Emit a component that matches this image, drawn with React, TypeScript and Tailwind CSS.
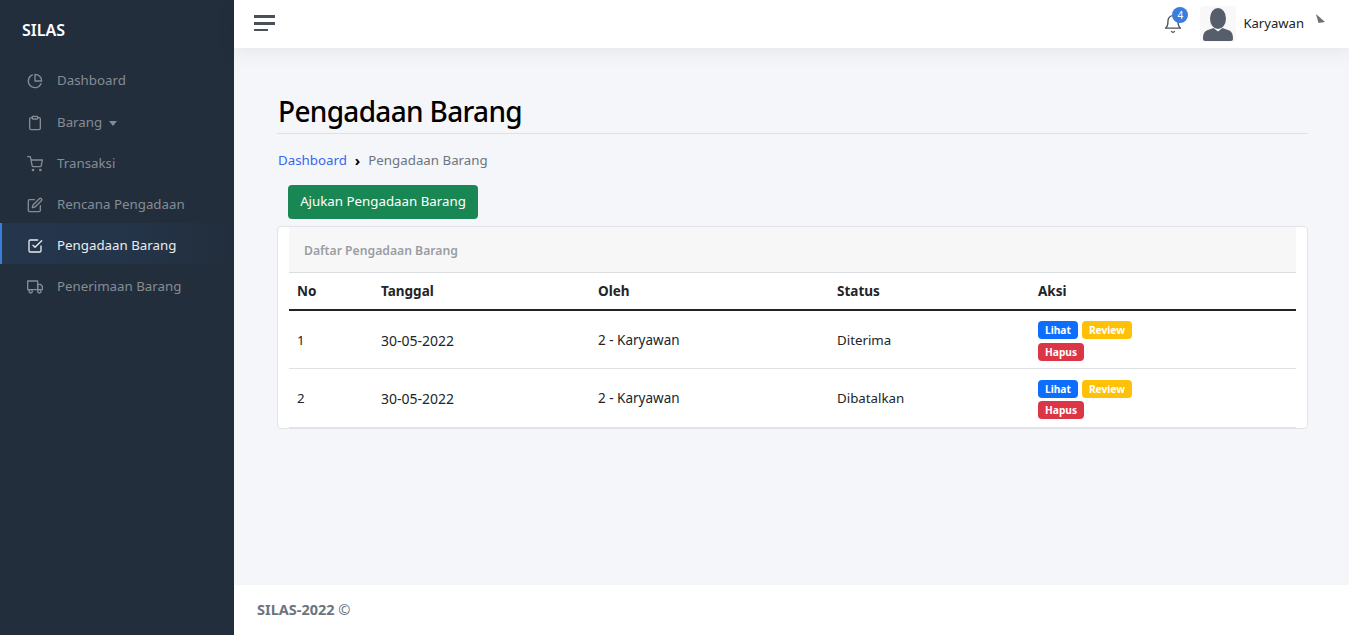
import React from "react";

const Badge = ({ c, children }: { c: string; children: React.ReactNode }) => (
  <span className={`inline-block rounded-[4px] px-[7px] py-[3px] text-[10.2px] leading-[12px] font-bold text-white ${c}`}>{children}</span>
);

const Icon = ({ children }: { children: React.ReactNode }) => (
  <svg width="16" height="16" viewBox="0 0 24 24" fill="none" stroke="currentColor" strokeWidth="2" strokeLinecap="round" strokeLinejoin="round" className="shrink-0">{children}</svg>
);

const items: { label: string; active?: boolean; caret?: boolean; icon: React.ReactNode }[] = [
  { label: "Dashboard", icon: <><path d="M21.21 15.89A10 10 0 1 1 8 2.83" /><path d="M22 12A10 10 0 0 0 12 2v10z" /></> },
  { label: "Barang", caret: true, icon: <><path d="M16 4h2a2 2 0 0 1 2 2v14a2 2 0 0 1-2 2H6a2 2 0 0 1-2-2V6a2 2 0 0 1 2-2h2" /><rect x="8" y="2" width="8" height="4" rx="1" /></> },
  { label: "Transaksi", icon: <><circle cx="9" cy="21" r="1" /><circle cx="20" cy="21" r="1" /><path d="M1 1h4l2.68 13.39a2 2 0 0 0 2 1.61h9.72a2 2 0 0 0 2-1.61L23 6H6" /></> },
  { label: "Rencana Pengadaan", icon: <><path d="M11 4H4a2 2 0 0 0-2 2v14a2 2 0 0 0 2 2h14a2 2 0 0 0 2-2v-7" /><path d="M18.5 2.5a2.121 2.121 0 0 1 3 3L12 15l-4 1 1-4 9.5-9.5z" /></> },
  { label: "Pengadaan Barang", active: true, icon: <><polyline points="9 11 12 14 22 4" /><path d="M21 12v7a2 2 0 0 1-2 2H5a2 2 0 0 1-2-2V5a2 2 0 0 1 2-2h11" /></> },
  { label: "Penerimaan Barang", icon: <><rect x="1" y="3" width="15" height="13" /><polygon points="16 8 20 8 23 11 23 16 16 16 16 8" /><circle cx="5.5" cy="18.5" r="2.5" /><circle cx="18.5" cy="18.5" r="2.5" /></> },
];

const rows = [
  { no: "1", status: "Diterima", pt: "pt-[1px]", ptSmall: "pt-[3px]", gap: "gap-y-[4px]" },
  { no: "2", status: "Dibatalkan", pt: "pt-0", ptSmall: "pt-[2px]", gap: "gap-y-[3px]" },
];

export default function App() {
  return (
    <div className="flex h-[635px] w-full overflow-hidden bg-[#f5f6fa] text-[13.3px] text-[#212529] font-['Noto_Sans','Open_Sans',sans-serif]">
      <aside className="w-[234px] shrink-0 bg-[#222e3c]">
        <div className="h-[59px] pl-[22px] pt-[18px] text-[16px] leading-[24px] font-semibold text-white">SILAS</div>
        <nav>
          {items.map((it, i) => (
            <div key={it.label} className={`flex h-[41px] items-center ${it.active ? "border-l-2 border-[#3b7ddd] pl-[25px] bg-[linear-gradient(90deg,rgba(59,125,221,0.1),rgba(59,125,221,0.0875)_50%,rgba(0,0,0,0))] text-[#e9ecef]" : "pl-[27px] text-[#868c94]"} ${i === 0 ? "pt-[2px]" : "pt-[4px]"}`}>
              <Icon>{it.icon}</Icon>
              <span className="ml-[14px]">{it.label}</span>
              {it.caret && <span className="ml-[7px] mt-[1px] h-0 w-0 border-x-[4.5px] border-t-[5px] border-x-transparent border-t-[#868c94]" />}
            </div>
          ))}
        </nav>
      </aside>

      <div className="flex min-w-0 flex-1 flex-col">
        <header className="flex h-[48px] shrink-0 items-center bg-white pl-[20px] pr-[24px] shadow-[0_4px_20px_rgba(0,0,0,0.07)]">
          <div className="-mt-[2px] flex flex-col items-start gap-[4px]">
            <span className="h-[3px] w-[21px] bg-[#495057]" />
            <span className="h-[3px] w-[21px] bg-[#495057]" />
            <span className="h-[2px] w-[14px] bg-[#495057]" />
          </div>
          <div className="ml-auto flex items-center">
            <div className="relative mr-[17px]">
              <svg width="20" height="20" viewBox="0 0 24 24" fill="none" stroke="#495057" strokeWidth="1.6" strokeLinecap="round" strokeLinejoin="round" className="block">
                <path d="M18 8A6 6 0 0 0 6 8c0 7-3 9-3 9h18s-3-2-3-9" />
                <path d="M13.73 21a2 2 0 0 1-3.46 0" />
              </svg>
              <span className="absolute -top-[7px] left-[9px] flex h-[16px] w-[16px] items-center justify-center rounded-full bg-[#3b7ddd] text-[10px] text-white">4</span>
            </div>
            <div className="flex h-[36px] w-[36px] items-center justify-center rounded-[4px] bg-[#f8f8f8]">
              <svg width="36" height="36" viewBox="0 0 36 36" fill="#565d6b">
                <ellipse cx="18" cy="12.5" rx="8" ry="10.5" />
                <path d="M3 33c0-5 1-7.500 5-9l5.500-2 4.500 3.500 4.500-3.500 5.500 2c4 1.500 5 4 5 9 0 1-1 2-2 2H5c-1 0-2-1-2-2z" />
              </svg>
            </div>
            <span className="ml-[7px] text-[13.1px] text-[#212529]">Karyawan</span>
            <svg width="9" height="9" viewBox="0 0 9 9" className="ml-[12px] -mt-[11px]"><path d="M0 0L9 8L2.500 9z" fill="#6c6f75" /></svg>
          </div>
        </header>

        <main className="flex-1 pl-[43px] pr-[41px] pt-[43px]">
          <h1 className="border-b border-[#dee2e6] pb-[2px] pl-[1px] text-[28px] leading-[40px] font-medium tracking-[-0.68px] text-black">Pengadaan Barang</h1>
          <div className="mt-[14px] flex items-center pl-[1px] leading-[24px]">
            <span className="text-[#3567f0]">Dashboard</span>
            <span className="mx-[8px] text-[15px] leading-[20px] font-bold text-black">›</span>
            <span className="text-[#6c757d]">Pengadaan Barang</span>
          </div>
          <button className="mt-[13px] ml-[11px] block h-[34px] w-[190px] rounded-[4px] bg-[#198754] text-white">Ajukan Pengadaan Barang</button>
          <section className="mt-[7px] h-[203px] rounded-[4px] border border-[#e2e3e6] bg-white px-[11px]">
            <div className="flex h-[46px] items-center border-b border-[#dcdde0] bg-[#f7f7f7] pl-[15px] pt-[4px] text-[12.2px] font-semibold text-[#9a9ea3]">Daftar Pengadaan Barang</div>
            <div className="border-b-2 border-[#e2e3e6]">
              <div className="grid h-[38px] grid-cols-[84px_217px_239px_201px_1fr] items-center border-b-2 border-[#212529] pl-[8px] text-[13.5px] font-bold">
                <span>No</span><span>Tanggal</span><span>Oleh</span><span>Status</span><span>Aksi</span>
              </div>
              {rows.map((r, i) => (
                <div key={r.no} className={`grid h-[58px] grid-cols-[84px_217px_239px_201px_1fr] items-center pl-[8px] ${i === 0 ? "border-b border-[#dee2e6]" : ""}`}>
                  <span className={r.ptSmall}>{r.no}</span>
                  <span className={`text-[14px] ${r.pt}`}>30-05-2022</span>
                  <span className={`text-[13.5px] ${r.pt}`}>2 - Karyawan</span>
                  <span className={r.ptSmall}>{r.status}</span>
                  <div className={`mt-[3px] flex w-[110px] flex-wrap gap-x-[4px] ${r.gap}`}>
                    <Badge c="bg-[#0d6efd]">Lihat</Badge>
                    <Badge c="bg-[#ffc107]">Review</Badge>
                    <Badge c="bg-[#dc3545]">Hapus</Badge>
                  </div>
                </div>
              ))}
            </div>
          </section>
        </main>

        <footer className="flex h-[50px] shrink-0 items-center bg-white pl-[23px] text-[14.5px] font-bold text-[#6c757d]">
          <span>SILAS-2022 <span className="font-normal">©</span></span>
        </footer>
      </div>
    </div>
  );
}
